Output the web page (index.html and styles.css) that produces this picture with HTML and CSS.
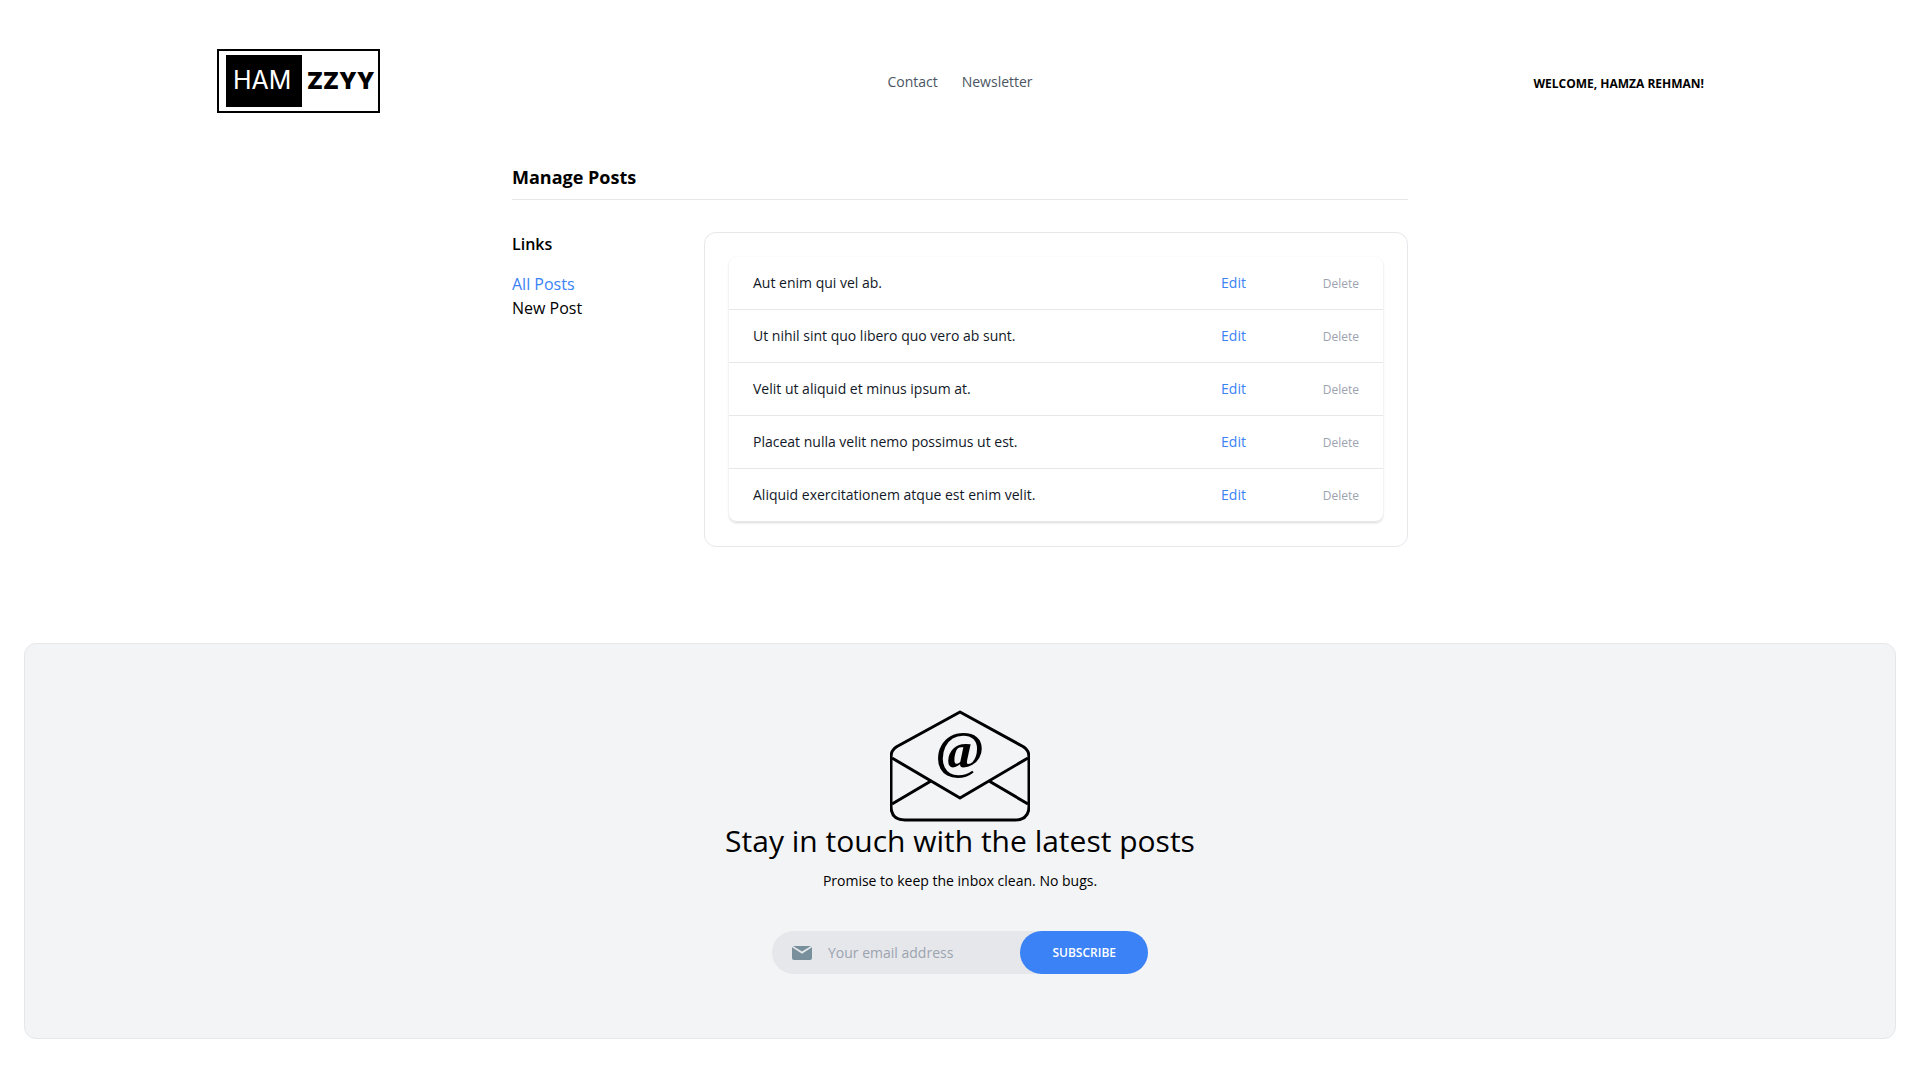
FILE: index.html
```html
<!DOCTYPE html>
<html lang="en">
<head>
  <meta charset="utf-8">
  <meta name="viewport" content="width=device-width, initial-scale=1">
  <title>Manage Posts</title>
  <link rel="stylesheet" href="styles.css">
</head>
<body>
  <div class="page">
    <nav class="nav">
      <a class="nav-logo" href="#">
        <svg width="165" height="99" viewBox="0 0 165 99" role="img" aria-label="Hamzzyy">
          <rect class="logo-frame" x="2" y="18" width="161" height="62"/>
          <rect x="10" y="23" width="76" height="52"/>
          <text class="logo-light" x="17" y="57">HAM</text>
          <text class="logo-heavy" x="91" y="57">ZZYY</text>
        </svg>
      </a>
      <div class="nav-links">
        <a href="#">Contact</a>
        <a href="#newsletter">Newsletter</a>
      </div>
      <div class="nav-user">
        <button class="user-button" type="button">Welcome, Hamza Rehman!</button>
      </div>
    </nav>

    <section class="manage">
      <h1 class="manage-title">Manage Posts</h1>
      <div class="manage-body">
        <aside class="sidebar">
          <h4 class="sidebar-title">Links</h4>
          <ul class="sidebar-list">
            <li><a class="active" href="#">All Posts</a></li>
            <li><a href="#">New Post</a></li>
          </ul>
        </aside>
        <main class="panel">
          <div class="table-wrap">
            <table class="posts">
              <tbody>
                <tr>
                  <td><a href="#">Aut enim qui vel ab.</a></td>
                  <td class="action"><a class="edit" href="#">Edit</a></td>
                  <td class="action"><button class="delete" type="button">Delete</button></td>
                </tr>
                <tr>
                  <td><a href="#">Ut nihil sint quo libero quo vero ab sunt.</a></td>
                  <td class="action"><a class="edit" href="#">Edit</a></td>
                  <td class="action"><button class="delete" type="button">Delete</button></td>
                </tr>
                <tr>
                  <td><a href="#">Velit ut aliquid et minus ipsum at.</a></td>
                  <td class="action"><a class="edit" href="#">Edit</a></td>
                  <td class="action"><button class="delete" type="button">Delete</button></td>
                </tr>
                <tr>
                  <td><a href="#">Placeat nulla velit nemo possimus ut est.</a></td>
                  <td class="action"><a class="edit" href="#">Edit</a></td>
                  <td class="action"><button class="delete" type="button">Delete</button></td>
                </tr>
                <tr>
                  <td><a href="#">Aliquid exercitationem atque est enim velit.</a></td>
                  <td class="action"><a class="edit" href="#">Edit</a></td>
                  <td class="action"><button class="delete" type="button">Delete</button></td>
                </tr>
              </tbody>
            </table>
          </div>
        </main>
      </div>
    </section>

    <footer class="newsletter" id="newsletter">
      <svg class="newsletter-art" width="140" height="115" viewBox="30 8 140 115" aria-hidden="true">
        <g class="art-lines">
          <path d="M100 12 163 46.500Q169 50 169 57V106Q169 120 155 120H45Q31 120 31 106V57Q31 50 37 46.500Z"/>
          <path d="M32 58 100 98 168 58M32 104 71 81M168 104 129 81"/>
        </g>
        <text class="art-at" x="100" y="68" text-anchor="middle">@</text>
      </svg>
      <h5 class="newsletter-title">Stay in touch with the latest posts</h5>
      <p class="newsletter-text">Promise to keep the inbox clean. No bugs.</p>
      <form class="subscribe" action="#">
        <label class="subscribe-label" for="email" aria-label="Email">
          <svg width="20" height="14" viewBox="0 0 20 14" aria-hidden="true">
            <path d="M1 0H19L10 5.500ZM0 1.300 10 7.700 20 1.300V12Q20 14 18 14H2Q0 14 0 12Z"/>
          </svg>
        </label>
        <input class="subscribe-input" id="email" type="email" placeholder="Your email address">
        <button class="subscribe-button" type="submit">Subscribe</button>
      </form>
    </footer>
  </div>
</body>
</html>
```

FILE: styles.css
```css
*,
*::before,
*::after {
  box-sizing: border-box;
}

body {
  margin: 0;
  background: #fff;
  color: #000;
  font-family: "Open Sans", sans-serif;
  font-size: 16px;
  line-height: 24px;
}

h1,
h4,
h5,
p,
ul {
  margin: 0;
  padding: 0;
}

ul {
  list-style: none;
}

a {
  color: inherit;
  text-decoration: none;
}

button,
input {
  margin: 0;
  padding: 0;
  border: 0;
  background: transparent;
  color: inherit;
  font: inherit;
}

button {
  cursor: pointer;
}

svg {
  display: block;
}

.page {
  padding: 32px 24px;
}

/* Navigation */
.nav {
  display: grid;
  grid-template-columns: 1fr auto 1fr;
  align-items: center;
  padding: 0 192px;
}

.logo-frame {
  fill: none;
  stroke: #000;
  stroke-width: 2;
}

.logo-light,
.logo-heavy {
  font-family: Inter, sans-serif;
}

.logo-light {
  fill: #fff;
  font-size: 25px;
  font-weight: 400;
}

.logo-heavy {
  font-size: 23px;
  font-weight: 900;
}

.nav-links {
  display: flex;
  gap: 24px;
  color: #4b5563;
  font-size: 14px;
  line-height: 21px;
}

.nav-user {
  text-align: right;
}

.user-button {
  font-size: 12px;
  font-weight: 700;
  line-height: 16px;
  text-transform: uppercase;
}

/* Manage posts */
.manage {
  max-width: 896px;
  margin: 0 auto;
  padding: 32px 0;
}

.manage-title {
  margin-bottom: 32px;
  padding-bottom: 8px;
  border-bottom: 1px solid #e5e7eb;
  font-size: 18px;
  font-weight: 700;
  line-height: 28px;
}

.manage-body {
  display: flex;
}

.sidebar {
  flex: 0 0 192px;
}

.sidebar-title {
  margin-bottom: 16px;
  font-weight: 600;
}

.active,
.edit {
  color: #3b82f6;
}

.panel {
  flex: 1;
  padding: 24px;
  border: 1px solid #e5e7eb;
  border-radius: 12px;
}

.table-wrap {
  overflow: hidden;
  border-bottom: 1px solid #e5e7eb;
  border-radius: 8px;
  box-shadow: 0 1px 3px rgba(0, 0, 0, 0.1), 0 1px 2px rgba(0, 0, 0, 0.06);
}

.posts {
  width: 100%;
  border-spacing: 0;
  font-size: 14px;
  line-height: 20px;
  white-space: nowrap;
}

.posts td {
  padding: 16px 24px;
  color: #111827;
}

.posts tr + tr td {
  border-top: 1px solid #e5e7eb;
}

.posts .action {
  text-align: right;
}

.posts .edit {
  color: #3b82f6;
}

.delete {
  color: #9ca3af;
  font-size: 12px;
  line-height: 16px;
}

/* Newsletter */
.newsletter {
  display: flex;
  flex-direction: column;
  align-items: center;
  margin-top: 64px;
  padding: 64px 40px;
  border: 1px solid #e5e7eb;
  border-radius: 12px;
  background: #f3f4f6;
  text-align: center;
}

.art-lines {
  fill: none;
  stroke: #000;
  stroke-width: 3;
  stroke-linejoin: round;
}

.art-at {
  font-family: "Liberation Serif", serif;
  font-size: 53px;
  font-weight: 700;
}

.newsletter-title {
  font-size: 30px;
  font-weight: 400;
  line-height: 36px;
}

.newsletter-text {
  margin-top: 12px;
  font-size: 14px;
  line-height: 20px;
}

.subscribe {
  display: flex;
  width: 376px;
  max-width: 100%;
  margin-top: 40px;
  border-radius: 24px;
  background: #e5e7eb;
  font-size: 14px;
  line-height: 19px;
}

.subscribe-label {
  display: flex;
  align-items: center;
  padding: 0 16px 0 20px;
  fill: #78909c;
}

.subscribe-input {
  flex: 1;
  min-width: 0;
  padding: 12px 0;
  outline: 0;
}

.subscribe-input::placeholder {
  color: #9ca3af;
}

.subscribe-button {
  padding: 0 32px;
  border-radius: 24px;
  background: #3b82f6;
  color: #fff;
  font-size: 12px;
  font-weight: 600;
  text-transform: uppercase;
}
```
